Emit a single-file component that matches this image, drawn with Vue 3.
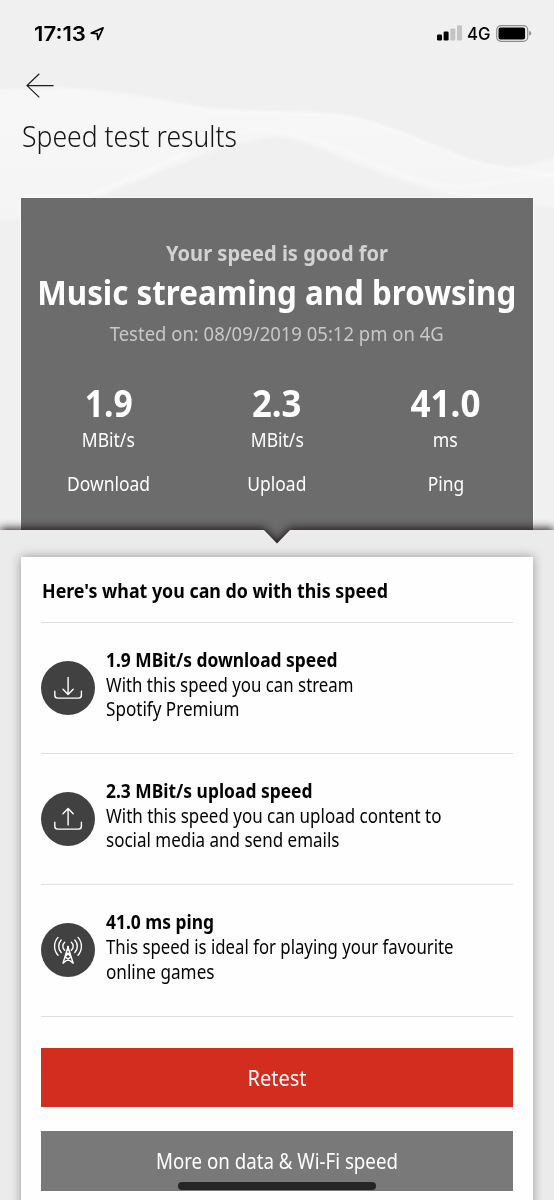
<script setup>
const stats = [
  { value: '1.9', unit: 'MBit/s', label: 'Download', w: [48, 53, 83] },
  { value: '2.3', unit: 'MBit/s', label: 'Upload', w: [49.5, 53, 59] },
  { value: '41.0', unit: 'ms', label: 'Ping', w: [70, 25, 36.5] },
]

const rows = [
  {
    icon: 'download',
    title: '1.9 MBit/s download speed',
    w: 231.5,
    lines: [
      { text: 'With this speed you can stream', w: 247.5 },
      { text: 'Spotify Premium', w: 133.5 },
    ],
  },
  {
    icon: 'upload',
    title: '2.3 MBit/s upload speed',
    w: 206.5,
    lines: [
      { text: 'With this speed you can upload content to', w: 335.5 },
      { text: 'social media and send emails', w: 233.5 },
    ],
  },
  {
    icon: 'ping',
    title: '41.0 ms ping',
    w: 108,
    lines: [
      { text: 'This speed is ideal for playing your favourite', w: 347.5 },
      { text: 'online games', w: 108.5 },
    ],
  },
]

// Condenses a line horizontally so that it takes the given width.
const vFit = {
  mounted(el, { value }) {
    el.style.transform = `scaleX(${value / el.getBoundingClientRect().width})`
  },
}
</script>

<template>
  <main class="screen">
    <svg class="waves" width="554" height="240" viewBox="0 0 554 240" aria-hidden="true">
      <defs>
        <linearGradient id="wash" x1="0" y1="0" x2="0" y2="1">
          <stop offset="0" stop-color="#fff" stop-opacity=".5" />
          <stop offset="1" stop-color="#fff" stop-opacity=".3" />
        </linearGradient>
        <filter id="soft"><feGaussianBlur stdDeviation="1.5" /></filter>
      </defs>
      <g filter="url(#soft)">
        <path d="M-5 90C80 86 150 100 205 109C250 113 310 110 350 117C420 133 450 160 500 167C525 170 540 160 560 158V207C500 206 450 198 400 180C350 163 310 140 277 136C180 148 110 210 -5 222Z" fill="url(#wash)" />
        <g fill="none" stroke="#fff" stroke-opacity=".6" stroke-width="2">
          <path d="M55 89C110 90 155 99 205 109C250 114 310 110 350 117C420 133 450 160 500 167C520 172 540 174 560 176" />
          <path d="M92 195C130 179 155 166 190 152" />
          <path d="M240 132C300 122 350 158 430 184C470 192 500 180 560 174" stroke-opacity=".4" />
        </g>
      </g>
    </svg>

    <header class="status">
      <span class="clock"><span v-fit="52" class="t left">17:13</span></span>
      <svg class="locate" width="15" height="15" viewBox="0 0 15 15">
        <path d="M1.3 7.1L13.1 1.8L7.9 13.4L7.2 7.6Z" fill="none" stroke="#000" stroke-width="1.7" stroke-linejoin="round" />
      </svg>
      <svg class="signal" width="25" height="16" viewBox="0 0 25 16">
        <rect x="0" y="9.5" width="5" height="6" rx="1.2" />
        <rect x="6.6" y="6.6" width="5" height="8.9" rx="1.2" />
        <rect x="13.3" y="3.4" width="5" height="12.1" rx="1.2" fill="#c4c4c4" />
        <rect x="20" y="0.2" width="5" height="15.3" rx="1.2" fill="#c4c4c4" />
      </svg>
      <span class="net"><span v-fit="23.5" class="t left">4G</span></span>
      <svg class="battery" width="36" height="17" viewBox="0 0 36 17">
        <rect x=".7" y=".7" width="31" height="15.6" rx="4.3" fill="none" stroke="#8d8d8d" stroke-width="1.2" />
        <rect x="2.5" y="2.5" width="26.6" height="12" rx="2" />
        <path d="M33.2 5.8Q35.2 6.5 35.2 8.3Q35.2 10.1 33.2 10.8Z" fill="#8d8d8d" />
      </svg>
    </header>

    <svg class="back" width="28" height="26" viewBox="0 0 28 26">
      <path d="M27.5 13.6H1M13.3 1.8L1 13.6L13.3 25.4" fill="none" stroke="#1c1c1c" stroke-width="1.2" />
    </svg>
    <h1 class="title"><span v-fit="215" class="t left">Speed test results</span></h1>

    <section class="hero">
      <p class="lead"><span v-fit="222" class="t">Your speed is good for</span></p>
      <p class="headline"><span v-fit="479" class="t">Music streaming and browsing</span></p>
      <p class="tested"><span v-fit="334" class="t">Tested on: 08/09/2019 05:12 pm on 4G</span></p>
      <div class="stats">
        <div v-for="s in stats" :key="s.label" class="stat">
          <p class="value"><span v-fit="s.w[0]" class="t">{{ s.value }}</span></p>
          <p class="unit"><span v-fit="s.w[1]" class="t">{{ s.unit }}</span></p>
          <p class="label"><span v-fit="s.w[2]" class="t">{{ s.label }}</span></p>
        </div>
      </div>
    </section>

    <section class="panel">
      <div class="backdrop"><div class="shape"></div></div>
      <div class="card">
        <h2 class="heading"><span v-fit="346" class="t left">Here's what you can do with this speed</span></h2>
        <article v-for="r in rows" :key="r.icon" class="row">
          <div class="badge">
            <svg width="54" height="54" viewBox="0 0 54 54" fill="none" stroke="#fff" stroke-width="1.4" stroke-linecap="round" stroke-linejoin="round">
              <template v-if="r.icon !== 'ping'">
                <path d="M13.8 30.3V34.3Q13.8 37.1 16.6 37.1H37.6Q40.4 37.1 40.4 34.3V30.3" />
                <path v-if="r.icon === 'download'" d="M27.1 16.5V33.2M22 28.3L27.1 33.4L32.2 28.3" />
                <path v-else d="M27.1 33V16.8M22 21.7L27.1 16.6L32.2 21.7" />
              </template>
              <template v-else>
                <path d="M27 24L22 40.2L30.2 33.6L25.4 29.5M27 24L32.2 40.2L23.9 33.6L28.7 29.5" />
                <path d="M27 23.8V27" stroke-width="2" />
                <path d="M23.7 27.2A5.2 5.2 0 0 1 23.7 19.2M30.3 27.2A5.2 5.2 0 0 0 30.3 19.2" />
                <path d="M20.2 29.5A9.2 9.2 0 0 1 20.2 16.9M33.8 29.5A9.2 9.2 0 0 0 33.8 16.9" />
                <path d="M17 32.2A13.3 13.3 0 0 1 17 14.4M37 32.2A13.3 13.3 0 0 0 37 14.4" />
              </template>
            </svg>
          </div>
          <div class="copy">
            <h3><span v-fit="r.w" class="t left">{{ r.title }}</span></h3>
            <p v-for="l in r.lines" :key="l.text"><span v-fit="l.w" class="t left">{{ l.text }}</span></p>
          </div>
        </article>
        <button class="btn primary"><span v-fit="59" class="t">Retest</span></button>
        <button class="btn"><span v-fit="242" class="t">More on data &amp; Wi-Fi speed</span></button>
      </div>
    </section>
    <div class="home"></div>
  </main>
</template>

<style>
body { background: #f0f0f0; }
</style>

<style scoped>
* { box-sizing: border-box; margin: 0; padding: 0; }
.screen {
  position: relative;
  width: 554px;
  height: 1200px;
  overflow: hidden;
  background: #f0f0f0;
  color: #000;
  font-family: "Noto Sans", "Open Sans", sans-serif;
}
.t { display: inline-block; white-space: nowrap; transform-origin: center; }
.t.left { transform-origin: left; }
.waves { position: absolute; left: 0; top: 0; }
.status {
  position: relative;
  display: flex;
  align-items: flex-start;
  height: 72px;
  padding: 25px 0 0 34px;
  font-family: Inter, sans-serif;
}
.clock { width: 56px; font-size: 20.5px; font-weight: 600; line-height: 17px; white-space: nowrap; }
.locate { margin-top: 1px; }
.signal { margin: 0 5px 0 332px; }
.net { width: 24px; font-size: 17.5px; font-weight: 500; line-height: 18px; white-space: nowrap; }
.battery { margin-left: 5px; flex: none; }
.signal, .locate { flex: none; }
.back { position: relative; display: block; margin-left: 26px; }
.title {
  position: relative;
  height: 40px;
  margin: 18px 0 0 22px;
  font-size: 29px;
  font-weight: 300;
  line-height: 40px;
  color: #141414;
}
.hero {
  position: relative;
  height: 347px;
  margin: 42px 21px 0;
  padding-top: 40px;
  background: #6c6c6c;
  color: #fff;
  text-align: center;
  box-shadow: 0 0 0 1px #f8f8f8;
}
.hero p { display: flex; justify-content: center; }
.lead { font-size: 21.5px; font-weight: 700; line-height: 30px; color: #d2d2d2; }
.headline { font-size: 34.5px; font-weight: 700; line-height: 46px; margin-top: 1px; }
.tested { font-size: 20px; font-weight: 400; line-height: 30px; margin-top: 4px; color: #c8c8c8; }
.stats { display: grid; grid-template-columns: repeat(3, 168.5px); justify-content: center; padding-top: 31px; }
.value { font-size: 37.5px; font-weight: 700; line-height: 46px; }
.unit { font-size: 20px; font-weight: 400; line-height: 30px; margin-top: -1px; }
.label { font-size: 20px; font-weight: 400; line-height: 30px; margin-top: 14px; }
.panel { position: relative; height: 670px; margin-top: -15px; padding: 27px 21px 0; }
.backdrop { position: absolute; inset: 0; filter: drop-shadow(0 -2px 4px rgba(20, 10, 12, .85)); }
.shape {
  height: 100%;
  background: #ebebeb;
  clip-path: polygon(0 0, 264px 0, 277px 13.5px, 290px 0, 100% 0, 100% 100%, 0 100%);
}
.card {
  position: relative;
  height: 700px;
  padding: 0 20px;
  background: #fefefe;
  box-shadow: 0 0 10px rgba(0, 0, 0, .36);
}
.heading { height: 66px; padding: 19px 0 0 1px; font-size: 19.3px; font-weight: 700; line-height: 30px; border-bottom: 1px solid #dedede; }
.row { display: flex; height: 131.2px; padding-top: 24.5px; border-bottom: 1px solid #dedede; }
.badge { width: 54px; height: 54px; margin: 13.4px 11px 0 0; border-radius: 50%; background: #414141; }
.badge svg { display: block; }
.copy h3, .copy p { font-size: 19px; line-height: 24.2px; height: 24.2px; }
.copy h3 { font-weight: 700; height: 25.5px; }
.btn {
  display: flex;
  justify-content: center;
  align-items: center;
  width: 472px;
  height: 59.5px;
  margin-top: 24px;
  border: 0;
  background: #797979;
  color: #fff;
  font-family: "Noto Sans", "Open Sans", sans-serif;
  font-size: 21px;
  font-weight: 400;
  line-height: 30px;
}
.btn.primary { margin-top: 31.4px; background: #d32d20; }
.home { position: absolute; left: 178px; top: 1182px; width: 198px; height: 7.5px; border-radius: 4px; background: #252725; }
</style>
